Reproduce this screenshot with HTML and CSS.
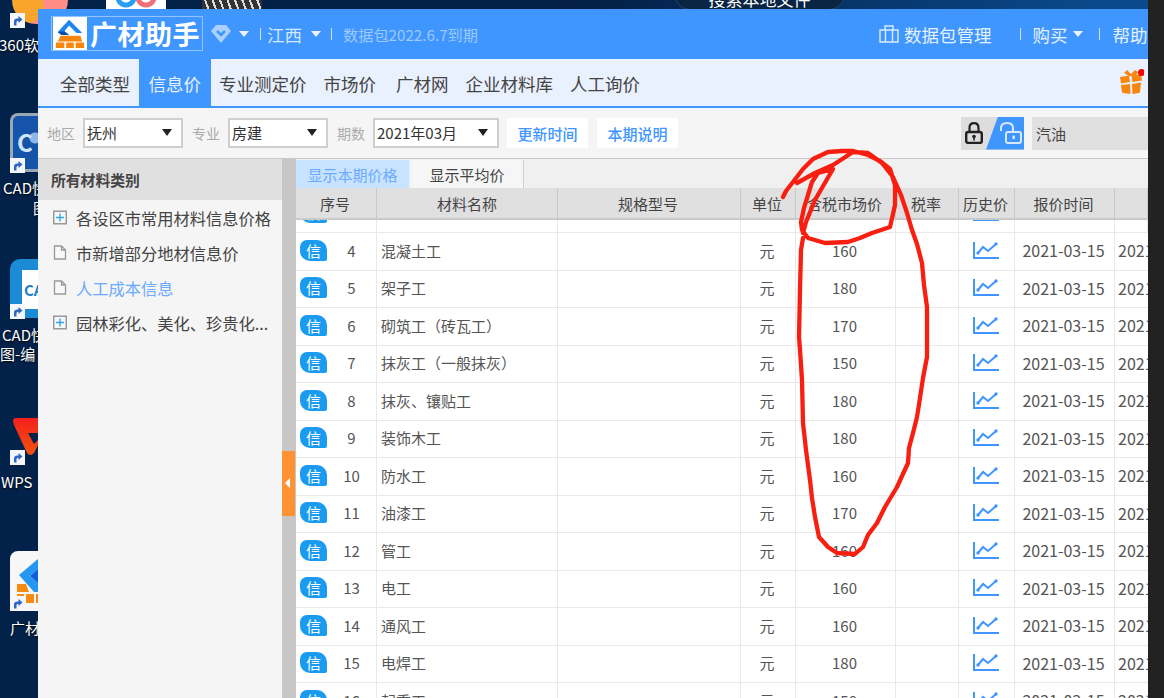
FILE: index.html
```html
<!DOCTYPE html>
<html lang="zh-CN">
<head>
<meta charset="utf-8">
<title>广材助手</title>
<link rel="stylesheet" href="styles.css">
</head>
<body>
<svg class="defs" width="0" height="0" aria-hidden="true">
  <symbol id="chart" viewBox="0 0 26 17">
    <path d="M1 0V16H26" fill="none" stroke="#4096ff" stroke-width="2"/>
    <path d="M5 11L10 5L15 9L23 2" fill="none" stroke="#4096ff" stroke-width="2"/>
    <circle cx="5" cy="11" r="1.700" fill="#4096ff"/><circle cx="23" cy="2" r="1.700" fill="#4096ff"/>
  </symbol>
  <symbol id="sc" viewBox="0 0 15 15">
    <rect width="15" height="15" fill="#f4f6fb"/>
    <path d="M4 12.500V8.500Q4 5.500 7.500 5.500H8.500V3L12.500 6.500L8.500 10V8H7.500Q6.500 8 6.500 9.500V12.500Z" fill="#2f66c4"/>
  </symbol>
  <symbol id="plus" viewBox="0 0 14 14">
    <rect x=".75" y=".75" width="12.500" height="12.500" fill="#f8f8f8" stroke="#999" stroke-width="1.500"/>
    <path d="M3 7H11M7 3V11" stroke="#2fa8e8" stroke-width="1.400"/>
  </symbol>
  <symbol id="doc" viewBox="0 0 13 15">
    <path d="M1 1H8L12 5V14H1Z M8 1V5H12" fill="#f8f8f8" stroke="#999" stroke-width="1.300"/>
  </symbol>
</svg>

<div class="desktop">
  <div class="top-pill">搜索本地文件</div>
  <div class="top-app app-blue"></div>
  <div class="top-app app-dark"></div>

  <div class="d-ico ico-360"></div>
  <svg class="sc sc-1"><use href="#sc"/></svg>
  <div class="d-label l-360">360软</div>

  <div class="d-ico ico-cad"><span>C</span></div>
  <svg class="sc sc-2"><use href="#sc"/></svg>
  <div class="d-label l-cad1">CAD快</div>
  <div class="d-label l-cad1b">图</div>

  <div class="d-ico ico-cad2"><span>CA</span></div>
  <svg class="sc sc-3"><use href="#sc"/></svg>
  <div class="d-label l-cad2">CAD快</div>
  <div class="d-label l-cad2b">图-编</div>

  <svg class="d-ico ico-wps" viewBox="0 0 26 40"><defs><linearGradient id="wpsg" x1="0" y1="0" x2="0" y2="1"><stop offset="0" stop-color="#f5201c"/><stop offset="1" stop-color="#f2520f"/></linearGradient></defs><path d="M0 5Q0 2 3 2H26V27L21 37Q17 41 14 37L1 9Z M15 17H26V23L21 28Z" fill="url(#wpsg)" fill-rule="evenodd"/></svg>
  <svg class="sc sc-4"><use href="#sc"/></svg>
  <div class="d-label l-wps">WPS</div>

  <svg class="d-ico ico-gc" viewBox="0 0 30 60">
    <rect width="40" height="60" rx="8" fill="#f7f7f7"/>
    <path d="M9 24L28 8V18L20 25L28 32V41H24Z" fill="#2497f3"/><path d="M20 25L28 18V32Z" fill="#0d5fd8"/>
    <path d="M7 33H16L19 41H7ZM7 43H14V52H7ZM16 43H24V52H16ZM26 43H30V52H26Z" fill="#f78a10"/>
  </svg>
  <svg class="sc sc-5"><use href="#sc"/></svg>
  <div class="d-label l-gc">广材</div>

  <div class="side-strip"></div>

  <main class="window">
    <header class="head">
      <div class="logo">
        <svg class="logo-mark" viewBox="0 0 36 35">
          <rect width="36" height="35" fill="#fff"/>
          <path d="M5 16L17 3L31 17H25L17 9L12 15L17 19H9Z" fill="#1c86ee"/>
          <path d="M5 16L12 15L17 19H9Z" fill="#0c4ea8"/>
          <path d="M8 20H29L31 26H5Z M3 27H12V33H3Z M14 27H22V33H14Z M24 27H33V33H24Z" fill="#f7860e"/>
        </svg>
        <span class="logo-text">广材助手</span>
      </div>
      <svg class="gem" viewBox="0 0 20 18"><path d="M5 0H15L20 6L10 18L0 6Z" fill="#a9d0ff"/><path d="M6 6L10 10L14 6" fill="none" stroke="#4096ff" stroke-width="2.500"/></svg>
      <i class="caret caret-a"></i>
      <i class="vbar"></i>
      <span class="region">江西</span>
      <i class="caret caret-b"></i>
      <i class="vbar vbar-b"></i>
      <span class="expiry">数据包2022.6.7到期</span>
      <div class="head-right">
        <svg class="bag" viewBox="0 0 20 18"><path d="M1 5H19V17H1Z M6 5V1H14V5 M6.500 5V17 M13.500 5V17" fill="none" stroke="#dcebff" stroke-width="1.400"/></svg>
        <span class="hr-text">数据包管理</span>
        <i class="vbar vbar-c"></i>
        <span class="hr-text">购买</span>
        <i class="caret caret-c"></i>
        <i class="vbar vbar-d"></i>
        <span class="hr-text">帮助</span>
      </div>
    </header>

    <nav class="nav">
      <a class="nav-item">全部类型</a>
      <a class="nav-item active">信息价</a>
      <a class="nav-item">专业测定价</a>
      <a class="nav-item">市场价</a>
      <a class="nav-item nav-wide">广材网</a>
      <a class="nav-item">企业材料库</a>
      <a class="nav-item">人工询价</a>
      <svg class="gift" viewBox="0 0 26 26">
        <path d="M6 4L9 1L13 5L17 1L20 3L18 6L14 7L11 7Z" fill="#f7860e"/>
        <path d="M2 8L11 6.500L12 13L3 14.500Z M13.500 6.500L23 5L24 11.500L14.500 13Z" fill="#f7860e"/>
        <path d="M3 16L12 15L12.500 25L5 24Q4 24 4 23Z M14 15L23 13.500L22 23Q22 24 21 24L14.500 25Z" fill="#f7860e"/>
        <circle cx="23.500" cy="3.500" r="3.500" fill="#f00"/>
      </svg>
    </nav>

    <section class="filters">
      <label class="f-label">地区</label>
      <div class="select s-a">抚州<i class="s-arrow"></i></div>
      <label class="f-label">专业</label>
      <div class="select s-a">房建<i class="s-arrow"></i></div>
      <label class="f-label">期数</label>
      <div class="select s-b">2021年03月<i class="s-arrow"></i></div>
      <button class="f-btn">更新时间</button>
      <button class="f-btn">本期说明</button>
      <div class="lock-group">
        <span class="lock">
          <svg viewBox="0 0 18 22" width="18" height="22"><path d="M4.500 10V6Q4.500 1.200 9 1.200Q13.500 1.200 13.500 6V10" fill="none" stroke="#222" stroke-width="2.200"/><rect x="1.200" y="10" width="15.600" height="11" rx="2" fill="none" stroke="#222" stroke-width="2.400"/><circle cx="9" cy="14.500" r="1.800" fill="#222"/><rect x="8.200" y="15" width="1.600" height="3.500" fill="#222"/></svg>
        </span>
        <span class="unlock">
          <svg viewBox="0 0 22 22" width="22" height="22"><path d="M1 9V6Q1 1 7 1Q13 1 13 6V10" fill="none" stroke="#d8e9ff" stroke-width="2"/><rect x="6" y="10" width="15" height="11" rx="2" fill="none" stroke="#d8e9ff" stroke-width="2"/><rect x="12.500" y="13.500" width="2.400" height="3.500" fill="#d8e9ff"/></svg>
        </span>
      </div>
      <div class="search">汽油</div>
    </section>

    <div class="body">
      <aside class="side">
        <div class="side-title">所有材料类别</div>
        <ul class="tree">
          <li class="tree-item"><svg class="t-ico"><use href="#plus"/></svg>各设区市常用材料信息价格</li>
          <li class="tree-item"><svg class="t-ico"><use href="#doc"/></svg>市新增部分地材信息价</li>
          <li class="tree-item current"><svg class="t-ico"><use href="#doc"/></svg>人工成本信息</li>
          <li class="tree-item"><svg class="t-ico"><use href="#plus"/></svg>园林彩化、美化、珍贵化...</li>
        </ul>
      </aside>
      <div class="splitter"><button class="collapse"></button></div>
      <div class="content">
        <div class="tabs">
          <span class="tab on">显示本期价格</span>
          <span class="tab">显示平均价</span>
        </div>
        <div class="row th">
          <span>序号</span><span>材料名称</span><span>规格型号</span><span>单位</span><span>含税市场价</span><span>税率</span><span>历史价</span><span>报价时间</span><span></span>
        </div>
        <div class="tbody">
          <div class="rows">
            <div class="row"><span class="c-no"><b class="badge">信</b></span><span></span><span></span><span></span><span></span><span></span><span><svg class="chart"><use href="#chart"/></svg></span><span></span><span></span></div>
            <div class="row"><span class="c-no"><b class="badge">信</b><em>4</em></span><span class="c-name">混凝土工</span><span></span><span>元</span><span>160</span><span></span><span><svg class="chart"><use href="#chart"/></svg></span><span class="c-date">2021-03-15</span><span class="c-last">2021-03-15</span></div>
            <div class="row"><span class="c-no"><b class="badge">信</b><em>5</em></span><span class="c-name">架子工</span><span></span><span>元</span><span>180</span><span></span><span><svg class="chart"><use href="#chart"/></svg></span><span class="c-date">2021-03-15</span><span class="c-last">2021-03-15</span></div>
            <div class="row"><span class="c-no"><b class="badge">信</b><em>6</em></span><span class="c-name">砌筑工（砖瓦工）</span><span></span><span>元</span><span>170</span><span></span><span><svg class="chart"><use href="#chart"/></svg></span><span class="c-date">2021-03-15</span><span class="c-last">2021-03-15</span></div>
            <div class="row"><span class="c-no"><b class="badge">信</b><em>7</em></span><span class="c-name">抹灰工（一般抹灰）</span><span></span><span>元</span><span>150</span><span></span><span><svg class="chart"><use href="#chart"/></svg></span><span class="c-date">2021-03-15</span><span class="c-last">2021-03-15</span></div>
            <div class="row"><span class="c-no"><b class="badge">信</b><em>8</em></span><span class="c-name">抹灰、镶贴工</span><span></span><span>元</span><span>180</span><span></span><span><svg class="chart"><use href="#chart"/></svg></span><span class="c-date">2021-03-15</span><span class="c-last">2021-03-15</span></div>
            <div class="row"><span class="c-no"><b class="badge">信</b><em>9</em></span><span class="c-name">装饰木工</span><span></span><span>元</span><span>180</span><span></span><span><svg class="chart"><use href="#chart"/></svg></span><span class="c-date">2021-03-15</span><span class="c-last">2021-03-15</span></div>
            <div class="row"><span class="c-no"><b class="badge">信</b><em>10</em></span><span class="c-name">防水工</span><span></span><span>元</span><span>160</span><span></span><span><svg class="chart"><use href="#chart"/></svg></span><span class="c-date">2021-03-15</span><span class="c-last">2021-03-15</span></div>
            <div class="row"><span class="c-no"><b class="badge">信</b><em>11</em></span><span class="c-name">油漆工</span><span></span><span>元</span><span>170</span><span></span><span><svg class="chart"><use href="#chart"/></svg></span><span class="c-date">2021-03-15</span><span class="c-last">2021-03-15</span></div>
            <div class="row"><span class="c-no"><b class="badge">信</b><em>12</em></span><span class="c-name">管工</span><span></span><span>元</span><span>160</span><span></span><span><svg class="chart"><use href="#chart"/></svg></span><span class="c-date">2021-03-15</span><span class="c-last">2021-03-15</span></div>
            <div class="row"><span class="c-no"><b class="badge">信</b><em>13</em></span><span class="c-name">电工</span><span></span><span>元</span><span>160</span><span></span><span><svg class="chart"><use href="#chart"/></svg></span><span class="c-date">2021-03-15</span><span class="c-last">2021-03-15</span></div>
            <div class="row"><span class="c-no"><b class="badge">信</b><em>14</em></span><span class="c-name">通风工</span><span></span><span>元</span><span>160</span><span></span><span><svg class="chart"><use href="#chart"/></svg></span><span class="c-date">2021-03-15</span><span class="c-last">2021-03-15</span></div>
            <div class="row"><span class="c-no"><b class="badge">信</b><em>15</em></span><span class="c-name">电焊工</span><span></span><span>元</span><span>180</span><span></span><span><svg class="chart"><use href="#chart"/></svg></span><span class="c-date">2021-03-15</span><span class="c-last">2021-03-15</span></div>
            <div class="row"><span class="c-no"><b class="badge">信</b><em>16</em></span><span class="c-name">起重工</span><span></span><span>元</span><span>150</span><span></span><span><svg class="chart"><use href="#chart"/></svg></span><span class="c-date">2021-03-15</span><span class="c-last">2021-03-15</span></div>
          </div>
        </div>
      </div>
    </div>
  </main>

  <svg class="scribble" viewBox="0 0 1164 698">
    <path d="M783 197L786 191L793 182L803 169L813 159L828 152L842 151L853 151L868 155L880 161L890 169L895 185L895 205L890 227L872 233L860 238L848 242L825 243L808 238L802 230L801 222L804 208L812 182L818 173L833 169L826 181L815 200L806 222L803 233M797 183L815 173L833 165L853 152L868 153L882 163L893 177L901 195L907 213L912 230L917 244L922 263L924 285L927 307L927 335L927 357L923 378L920 398L917 417L913 433L909 448L908 463L897 487L885 507L877 523L868 535L863 547L855 554L837 553L828 547L819 537L815 517L812 498L810 480L806 450L803 423L802 380L800 350L799 337L800 290L801 250L803 238" fill="none" stroke="#f81e10" stroke-width="4.300" stroke-linejoin="round" stroke-linecap="round"/>
  </svg>
</div>
</body>
</html>
```

FILE: styles.css
```css
* { box-sizing: border-box; }
html, body { margin: 0; padding: 0; height: 100%; }
body { font-family: "Noto Sans CJK SC", "Noto Sans", sans-serif; overflow: hidden; }
.defs { position: absolute; }
ul { list-style: none; margin: 0; padding: 0; }

.desktop {
  position: relative;
  width: 1164px;
  height: 698px;
  overflow: hidden;
  background: linear-gradient(90deg, #03224a 0, #031f45 50%, #0a4a8c 95%);
}
.side-strip { position: absolute; left: 1148px; top: 0; width: 16px; height: 698px; background: #222; }

/* desktop items */
.top-pill {
  position: absolute; left: 674px; top: -20px; width: 171px; height: 30px;
  border-radius: 0 0 16px 16px; background: #0a2444; border: 1px solid #27405f;
  color: #fff; font-size: 17px; line-height: 36px; text-align: center;
}
.top-app { position: absolute; top: 0; height: 9px; width: 60px; }
.app-blue { left: 106px; background: radial-gradient(circle at 20px -3px, #fff 0 5px, #2a9df4 6px 10px, transparent 11px), radial-gradient(circle at 40px -3px, #fff 0 5px, #f0707a 6px 10px, transparent 11px), #fff; }
.app-dark { left: 202px; background: repeating-linear-gradient(70deg, #333 0 5px, #ddd 5px 7px); }
.d-ico { position: absolute; }
.ico-360 { left: 12px; top: -8px; width: 56px; height: 32px; background: radial-gradient(circle at 14px 14px, #f9a52c 0 17px, transparent 18px), #ff8c87; border-radius: 0 0 24px 24px; }
.ico-cad { left: 10px; top: 113px; width: 29px; height: 59px; overflow: hidden; border-radius: 8px 0 0 8px; border: 3px solid #9aa7b5; border-right: 0; background: radial-gradient(circle at 22px 22px, #8fb8e8 0 5px, transparent 6px), #1554a8; color: #cfe4ff; font-size: 24px; font-weight: 700; line-height: 52px; padding-left: 4px; }
.ico-cad2 { left: 10px; top: 259px; width: 29px; height: 59px; overflow: hidden; border-radius: 10px 0 0 10px; background: linear-gradient(90deg, #1b8bd6 0 12px, #fff 12px); border-top: 11px solid #1b8bd6; border-bottom: 9px solid #1b8bd6; color: #1f7fc4; font-size: 15px; font-weight: 700; line-height: 39px; padding-left: 14px; }
.ico-wps { left: 13px; top: 416px; width: 26px; height: 40px; }
.ico-gc { left: 10px; top: 551px; width: 30px; height: 60px; }
.sc { position: absolute; left: 10px; width: 15px; height: 15px; }
.sc-1 { top: 13px; } .sc-2 { top: 158px; } .sc-3 { top: 304px; } .sc-4 { top: 450px; } .sc-5 { top: 596px; }
.d-label { position: absolute; color: #fff; font-size: 15px; line-height: 20px; white-space: nowrap; text-shadow: 0 1px 2px #000; }
.l-360 { left: -1px; top: 35px; }
.l-cad1 { left: 3px; top: 178px; }
.l-cad1b { left: 33px; top: 198px; }
.l-cad2 { left: 2px; top: 325px; }
.l-cad2b { left: 0; top: 344px; }
.l-wps { left: 1px; top: 472px; }
.l-gc { left: 10px; top: 618px; }

/* app window */
.window {
  position: absolute; left: 38px; top: 9px; width: 1110px; height: 689px;
  display: flex; flex-direction: column; background: #f5f5f5; overflow: hidden;
}
.head { flex: none; height: 50px; background: #4096ff; display: flex; align-items: center; padding-left: 13px; color: #fff; }
.logo { display: flex; width: 152px; height: 35px; border: 1px solid #8fc2ff; margin-top: -2px; }
.logo-mark { width: 36px; height: 33px; flex: none; }
.logo-text { font-size: 27px; font-weight: 700; letter-spacing: .5px; line-height: 33px; margin-left: 2px; white-space: nowrap; }
.gem { width: 20px; height: 18px; margin-left: 8px; flex: none; }
.caret { flex: none; width: 0; height: 0; border-left: 5.500px solid transparent; border-right: 5.500px solid transparent; border-top: 6px solid #eaf3ff; }
.caret-a { margin-left: 8px; }
.caret-b { margin-left: 9px; }
.caret-c { margin-left: 5px; }
.vbar { flex: none; width: 1px; height: 12px; background: #cfe3ff; margin-left: 11px; }
.vbar-b { margin-left: 10px; }
.region { font-size: 17.500px; color: #d5e7ff; margin-left: 6px; }
.expiry { font-size: 15.200px; color: #9cc9ff; margin-left: 11px; white-space: nowrap; }
.head-right { margin-left: auto; display: flex; align-items: center; width: 269px; flex: none; white-space: nowrap; overflow: hidden; }
.bag { width: 20px; height: 18px; flex: none; margin-right: 5px; }
.hr-text { font-size: 17.500px; color: #e6f1ff; flex: none; }
.vbar-c { margin-left: 28px; margin-right: 12px; }
.vbar-d { margin-left: 16px; margin-right: 13px; }

.nav { flex: none; height: 49px; background: #e9f0fe; border-bottom: 2px solid #4096ff; display: flex; padding-left: 13.500px; position: relative; }
.nav-item { padding: 0 8.500px; font-size: 17.500px; line-height: 50px; color: #444; white-space: nowrap; }
.nav-wide { margin-left: 3px; }
.nav-item.active { background: #4096ff; color: #e8f2ff; padding: 0 9.500px 0 10px; line-height: 50px; }
.gift { position: absolute; right: 4px; top: 10px; width: 26px; height: 26px; }

.filters { flex: none; height: 51px; background: #f5f5f5; border-bottom: 1px solid #c9c9c9; display: flex; align-items: center; padding-left: 9px; }
.f-label { font-size: 14px; color: #aaa; width: 36px; flex: none; }
.select { position: relative; height: 30px; background: #fff; border: 2px solid #cfcfcf; font-size: 15px; line-height: 26px; padding-left: 2px; color: #333; flex: none; white-space: nowrap; }
.s-a { width: 100px; }
.s-b { width: 126px; }
.select + .f-label { margin-left: 9px; }
.s-arrow { position: absolute; right: 9px; top: 9px; width: 0; height: 0; border-left: 5px solid transparent; border-right: 5px solid transparent; border-top: 7px solid #222; }
.f-btn { flex: none; width: 81px; height: 30px; border: 0; padding: 0; background: #fff; color: #4096ff; font: 500 15px "Noto Sans CJK SC", sans-serif; margin-left: 9px; }
.select + .f-btn { margin-left: 8px; }
.lock-group { margin-left: auto; width: 63px; height: 33px; flex: none; display: flex; background: #ddd; position: relative; }
.lock { width: 25px; display: flex; align-items: center; justify-content: center; }
.unlock { position: absolute; right: 0; top: 0; width: 38px; height: 33px; background: #4096ff; clip-path: polygon(12px 0, 100% 0, 100% 100%, 0 100%); display: flex; align-items: center; padding-left: 14px; }
.search { flex: none; width: 116px; height: 33px; margin-left: 8px; background: #e0e0e0; font-size: 15px; line-height: 33px; padding-left: 4px; color: #444; }

.body { flex: 1; display: flex; min-height: 0; }
.side { flex: none; width: 244px; background: #f5f5f5; }
.side-title { height: 41px; background: #e0e0e0; font-size: 14.800px; font-weight: 700; line-height: 41px; padding-left: 13px; color: #444; }
.tree-item { height: 35px; display: flex; align-items: center; font-size: 16.250px; color: #444; padding-left: 15px; white-space: nowrap; }
.tree-item.current { color: #6aaaff; }
.t-ico { width: 14px; height: 15px; margin-right: 9px; flex: none; }
.splitter { flex: none; width: 14px; background: #c8c7c5; position: relative; }
.collapse { position: absolute; left: 0; top: 292px; width: 13px; height: 65px; padding: 0; border: 0; background: #ff9233; }
.collapse::after { content: ""; position: absolute; left: 3px; top: 27px; border-top: 5px solid transparent; border-bottom: 5px solid transparent; border-right: 5px solid #fff; }

.content { flex: 1; min-width: 0; display: flex; flex-direction: column; background: #fff; }
.tabs { flex: none; height: 29px; padding-top: 1px; background: #f0f0f0; display: flex; gap: 2px; }
.tab { width: 113px; font-size: 15px; line-height: 29px; text-align: center; background: #f6f6f6; color: #444; border-right: 1px solid #cfcfcf; }
.tab.on { background: #c7e3ff; color: #6aaaff; border-right: 0; }
.row { display: grid; grid-template-columns: 81px 181px 183px 55px 100px 63px 56px 100px 33px; height: 37.500px; border-bottom: 1px solid #e9e9e9; font-size: 15px; color: #555; }
.row > span { display: flex; align-items: center; justify-content: center; padding: 0 2px 2px 0; border-right: 1px solid #e9e9e9; white-space: nowrap; overflow: hidden; min-width: 0; }
.row.th { flex: none; height: 32px; background: #e0e0e0; border-bottom: 2px solid #c9c9c9; color: #444; }
.row.th > span { border-right: 1px solid #c9c9c9; padding: 0 2px 0 0; }
.row.th > span:nth-child(2) { padding-right: 0; }
.tbody { flex: 1; min-height: 0; overflow: hidden; }
.rows { margin-top: -24.500px; }
.row > .c-no { justify-content: flex-start; padding: 0 0 2px 4px; }
.c-no em { flex: 1; text-align: center; font-style: normal; }
.badge { flex: none; width: 27px; height: 21px; background: #1b9bf0; color: #fff; font-size: 15px; font-weight: 400; line-height: 21px; text-align: center; border-radius: 7px 10px 2px 10px; }
.row > .c-name { justify-content: flex-start; padding: 0 0 2px 4px; }
.c-date { font-size: 16px; }
.row > .c-last { justify-content: flex-start; padding: 0 0 2px 3px; font-size: 16px; border-right: 0; }
.chart { width: 26px; height: 17px; }

.scribble { position: absolute; left: 0; top: 0; width: 1164px; height: 698px; pointer-events: none; }
```
